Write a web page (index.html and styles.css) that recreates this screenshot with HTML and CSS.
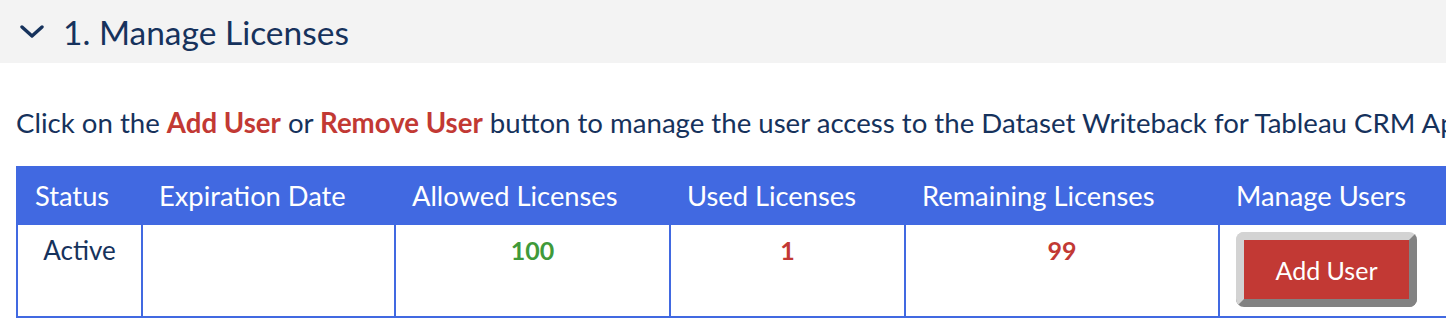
FILE: index.html
```html
<!DOCTYPE html>
<html lang="en">
<head>
  <meta charset="UTF-8" />
  <meta name="viewport" content="width=device-width, initial-scale=1.0" />
  <title>Manage Licenses</title>
  <link rel="stylesheet" href="styles.css">
</head>
<body>
  <div class="section-head">
    <svg class="chevron" width="24" height="14" viewBox="0 0 24 14">
      <polyline points="2,2 12,11 22,2" fill="none" stroke="#16325c" stroke-width="3.4" stroke-linecap="round" stroke-linejoin="round" />
    </svg>
    <h2>1. Manage Licenses</h2>
  </div>

  <p class="intro">Click on the <strong>Add User</strong> or <strong>Remove User</strong> button to manage the user access to the Dataset Writeback for Tableau CRM App.</p>

  <table class="licenses">
    <colgroup>
      <col class="c-status">
      <col class="c-exp">
      <col class="c-allowed">
      <col class="c-used">
      <col class="c-remaining">
      <col class="c-manage">
    </colgroup>
    <thead>
      <tr>
        <th>Status</th>
        <th>Expiration Date</th>
        <th>Allowed Licenses</th>
        <th>Used Licenses</th>
        <th>Remaining Licenses</th>
        <th>Manage Users</th>
      </tr>
    </thead>
    <tbody>
      <tr>
        <td>Active</td>
        <td></td>
        <td class="num good">100</td>
        <td class="num bad">1</td>
        <td class="num bad">99</td>
        <td class="manage"><button class="add-user">Add User</button></td>
      </tr>
    </tbody>
  </table>
</body>
</html>
```

FILE: styles.css
```css
* { box-sizing: border-box; margin: 0; padding: 0; }
html, body { overflow: hidden; }
body { font-family: Lato, sans-serif; background: #fff; color: #16325c; }

.section-head { display: flex; align-items: center; gap: 19px; height: 63px; padding-left: 20px; background: #f3f3f3; }
.chevron { display: block; }
.section-head h2 { font-size: 33.5px; font-weight: 400; color: #16325c; }

.intro { margin: 40px 0 0 16px; font-size: 27.6px; line-height: 40px; white-space: nowrap; }
.intro strong { color: #c23934; font-weight: 700; }

.licenses { margin: 23px 0 0 16px; border-collapse: collapse; border: 2px solid #4169e1; width: 1470px; table-layout: fixed; }
.c-status { width: 125px; }
.c-exp { width: 253px; }
.c-allowed { width: 275px; }
.c-used { width: 235px; }
.c-remaining { width: 314px; }
.c-manage { width: 268px; }
.licenses th { background: #4169e1; color: #fff; font-size: 27.3px; font-weight: 400; text-align: left; height: 57px; padding: 0 17px; white-space: nowrap; }
.licenses td { border: 2px solid #4169e1; vertical-align: top; text-align: center; font-size: 26px; padding: 9px 8px; height: 93px; }
.licenses td.num { font-size: 25px; font-weight: 700; padding-top: 10px; }
.good { color: #3f9a3a; }
.bad { color: #c23934; }
.licenses td.manage { text-align: left; padding: 7px 16px; }

.add-user { width: 181px; height: 75px; background: #c23934; color: #fff; font-family: Lato, sans-serif; font-size: 25px; border: 8px solid; border-color: #d3d3d3 #828282 #828282 #d3d3d3; border-radius: 8px; cursor: pointer; }
```
